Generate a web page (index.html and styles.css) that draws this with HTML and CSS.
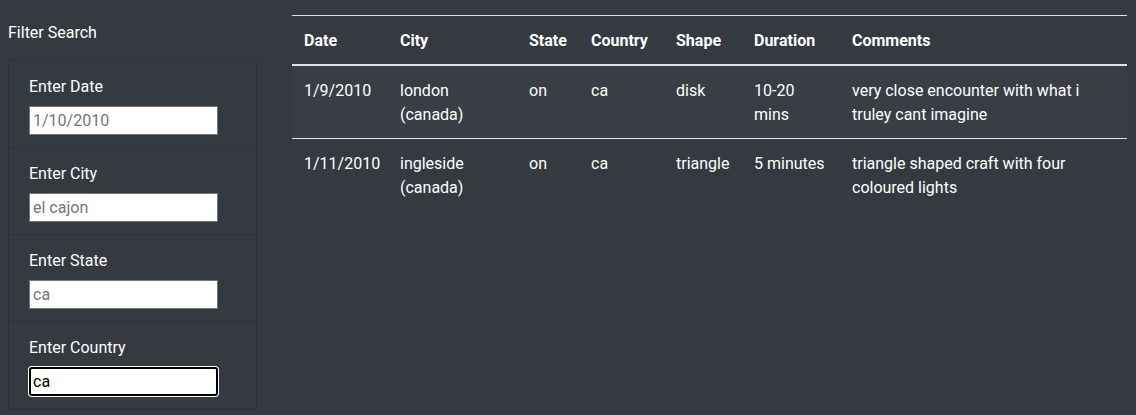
FILE: index.html
```html
<!DOCTYPE html>
<html lang="en">
<head>
<meta charset="utf-8">
<title>UFO Sightings</title>
<link rel="stylesheet" href="styles.css">
</head>
<body>
<div class="page">
  <aside class="sidebar">
    <div class="filter-title">Filter Search</div>
    <ul class="filters">
      <li class="filter-item">
        <label class="filter-label" for="date">Enter Date</label>
        <input class="filter-input" id="date" type="text" placeholder="1/10/2010">
      </li>
      <li class="filter-item">
        <label class="filter-label" for="city">Enter City</label>
        <input class="filter-input" id="city" type="text" placeholder="el cajon">
      </li>
      <li class="filter-item">
        <label class="filter-label" for="state">Enter State</label>
        <input class="filter-input" id="state" type="text" placeholder="ca">
      </li>
      <li class="filter-item">
        <label class="filter-label" for="country">Enter Country</label>
        <input class="filter-input focused" id="country" type="text" value="ca">
      </li>
    </ul>
  </aside>
  <main class="content">
    <table class="ufo-table">
      <colgroup>
        <col class="c-date"><col class="c-city"><col class="c-state"><col class="c-country"><col class="c-shape"><col class="c-duration"><col class="c-comments">
      </colgroup>
      <thead>
        <tr>
          <th>Date</th><th>City</th><th>State</th><th>Country</th><th>Shape</th><th>Duration</th><th>Comments</th>
        </tr>
      </thead>
      <tbody>
        <tr>
          <td>1/9/2010</td><td>london (canada)</td><td>on</td><td>ca</td><td>disk</td><td>10-20 mins</td><td>very close encounter with what i truley cant imagine</td>
        </tr>
        <tr>
          <td>1/11/2010</td><td>ingleside (canada)</td><td>on</td><td>ca</td><td>triangle</td><td>5 minutes</td><td>triangle shaped craft with four coloured lights</td>
        </tr>
      </tbody>
    </table>
  </main>
</div>
</body>
</html>
```
FILE: styles.css
```css
html, body {
  margin: 0;
  padding: 0;
  background: #343a40;
  height: 100%;
}
body {
  font-family: "Segoe UI", Roboto, "Liberation Sans", sans-serif;
  font-size: 16px;
  line-height: 24px;
  color: #fff;
}
.page {
  display: flex;
  gap: 35px;
  padding: 0 9px 0 8px;
}
.sidebar {
  width: 249px;
  flex: none;
  padding-top: 21px;
}
.filter-title {
  margin-bottom: 15px;
}
.filters {
  list-style: none;
  margin: 0;
  padding: 0;
  border: 1px solid rgba(0, 0, 0, 0.125);
  border-bottom: none;
}
.filter-item {
  padding: 13px 20px 12px;
  border-bottom: 1px solid rgba(0, 0, 0, 0.125);
  display: flex;
  flex-direction: column;
  align-items: flex-start;
}
.filter-label {
  padding-top: 1px;
  margin-bottom: 7px;
}
.filter-input {
  box-sizing: border-box;
  width: 189px;
  height: 29px;
  margin: 0;
  padding: 1px 3px;
  border: 1px solid #767676;
  background: #fff;
  font-family: inherit;
  font-size: 16px;
  color: #000;
}
.filter-input::placeholder {
  color: #767676;
}
.filter-input.focused {
  border: 2px solid #000;
  border-radius: 3px;
  padding: 0 2px;
  box-shadow: 0 0 0 1px #fff;
  outline: none;
}
.content {
  flex: 1;
  padding-top: 15px;
}
.ufo-table {
  width: 100%;
  border-collapse: collapse;
  table-layout: fixed;
  color: #fff;
}
.c-date { width: 96px; }
.c-city { width: 129px; }
.c-state { width: 62px; }
.c-country { width: 85px; }
.c-shape { width: 78px; }
.c-duration { width: 98px; }
.ufo-table th,
.ufo-table td {
  padding: 13px 12px 11px;
  text-align: left;
  vertical-align: top;
  border-top: 1px solid #dee2e6;
}
.ufo-table th {
  font-weight: bold;
  border-bottom: 2px solid #dee2e6;
}
.ufo-table tbody tr:first-child td {
  border-top: none;
}
.ufo-table tbody tr:nth-child(odd) {
  background: rgba(255, 255, 255, 0.025);
}
```
